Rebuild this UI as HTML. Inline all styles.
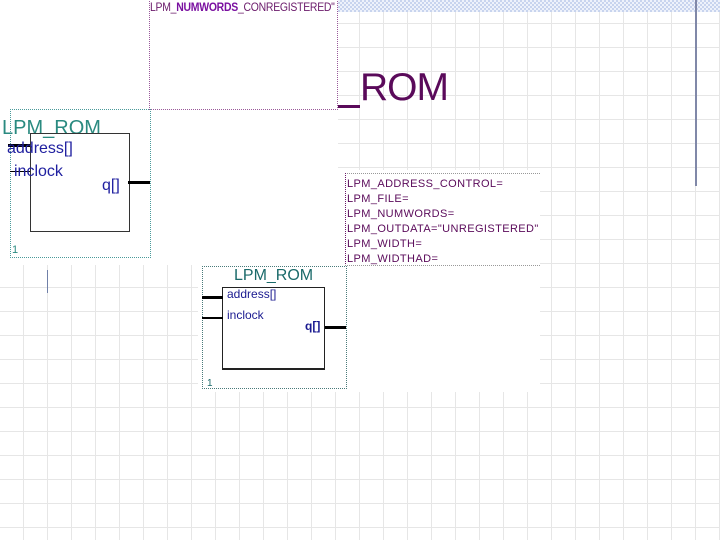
<!DOCTYPE html><html><head><style>
body{margin:0;width:720px;height:540px;overflow:hidden;position:relative;background:#fff;font-family:"Liberation Sans",sans-serif}
.grid{position:absolute;left:0;top:0;width:720px;height:540px;
background-image:repeating-linear-gradient(to right,transparent 0 23px,#e6e6e6 23px 24px),repeating-linear-gradient(to bottom,transparent 0 23px,#e6e6e6 23px 24px);}
.w{position:absolute;background:#fff}
.a{position:absolute}
.dot{position:absolute;border:1px dotted}
.t{position:absolute;white-space:nowrap;line-height:1}
</style></head><body>
<div class="grid"></div>
<div class="w" style="left:0;top:0;width:338px;height:265px"></div>
<div class="w" style="left:338px;top:170px;width:202px;height:222px"></div>
<div class="w" style="left:198px;top:262px;width:150px;height:130px"></div>
<div class="a" style="left:338px;top:0;width:382px;height:12px;background:repeating-conic-gradient(#c8d4ee 0 25%,#eef2fb 0 50%) 0 0/4px 4px"></div>
<div class="a" style="left:695px;top:0;width:2px;height:186px;background:#8088a8"></div>
<div class="a" style="left:47px;top:270px;width:1px;height:23px;background:#7080a8"></div>

<div class="dot" style="left:149px;top:-2px;width:187px;height:110px;border-color:#9a5a9a"></div>
<div class="t" style="left:150px;top:1px;font-size:12px;color:#6a1a6a;letter-spacing:-0.3px;transform:scaleX(0.87);transform-origin:0 0">LPM_<b style="color:#7a10a0">NUMWORDS</b>_CONREGISTERED"</div>
<div class="a" style="left:338px;top:105px;width:22px;height:3px;background:#5a0a5a"></div>
<div class="t" style="left:360px;top:68px;font-size:39px;color:#5a0a5a;letter-spacing:-1px">ROM</div>

<div class="dot" style="left:10px;top:109px;width:139px;height:147px;border-color:#4a9a9a"></div>
<div class="t" style="left:2px;top:118px;font-size:20px;color:#2a8a80">LPM_ROM</div>
<div class="a" style="left:30px;top:133px;width:98px;height:97px;border:1.5px solid #333"></div>
<div class="a" style="left:8px;top:144px;width:22px;height:3px;background:#000"></div>
<div class="t" style="left:7px;top:141px;font-size:16px;color:#2020a0">address[]</div>
<div class="a" style="left:10px;top:171px;width:20px;height:1px;background:#000"></div>
<div class="t" style="left:14px;top:164px;font-size:16px;color:#2020a0">inclock</div>
<div class="t" style="left:102px;top:178px;font-size:16px;color:#2020a0">q[]</div>
<div class="a" style="left:128px;top:181px;width:22px;height:3px;background:#000"></div>
<div class="t" style="left:12px;top:245px;font-size:11px;color:#2a8a80">1</div>

<div class="a" style="left:345px;top:173px;width:195px;border-top:1px dotted #999"></div>
<div class="a" style="left:345px;top:173px;height:93px;border-left:1px dotted #6a1a6a"></div>
<div class="a" style="left:345px;top:265px;width:195px;border-top:1px dotted #999"></div>
<div class="t" style="left:347px;top:177px;font-size:11px;line-height:15px;color:#5a0a5a;letter-spacing:0.4px">LPM_ADDRESS_CONTROL=<br>LPM_FILE=<br>LPM_NUMWORDS=<br>LPM_OUTDATA="UNREGISTERED"<br>LPM_WIDTH=<br>LPM_WIDTHAD=</div>

<div class="dot" style="left:202px;top:266px;width:143px;height:121px;border-color:#4a7a7a"></div>
<div class="t" style="left:234px;top:268px;font-size:16px;color:#1a6a6a">LPM_ROM</div>
<div class="a" style="left:222px;top:287px;width:101px;height:80px;border:1px solid #222;border-bottom-width:2px"></div>
<div class="a" style="left:202px;top:296px;width:21px;height:3px;background:#000"></div>
<div class="t" style="left:227px;top:288px;font-size:12px;color:#1a1a90">address[]</div>
<div class="a" style="left:202px;top:317px;width:21px;height:1.5px;background:#000"></div>
<div class="t" style="left:227px;top:309px;font-size:12px;color:#1a1a90">inclock</div>
<div class="t" style="left:305px;top:320px;font-size:12px;color:#1a1a90;font-weight:bold">q[]</div>
<div class="a" style="left:325px;top:326px;width:21px;height:3px;background:#000"></div>
<div class="t" style="left:207px;top:379px;font-size:10px;color:#1a6a6a">1</div>
</body></html>
